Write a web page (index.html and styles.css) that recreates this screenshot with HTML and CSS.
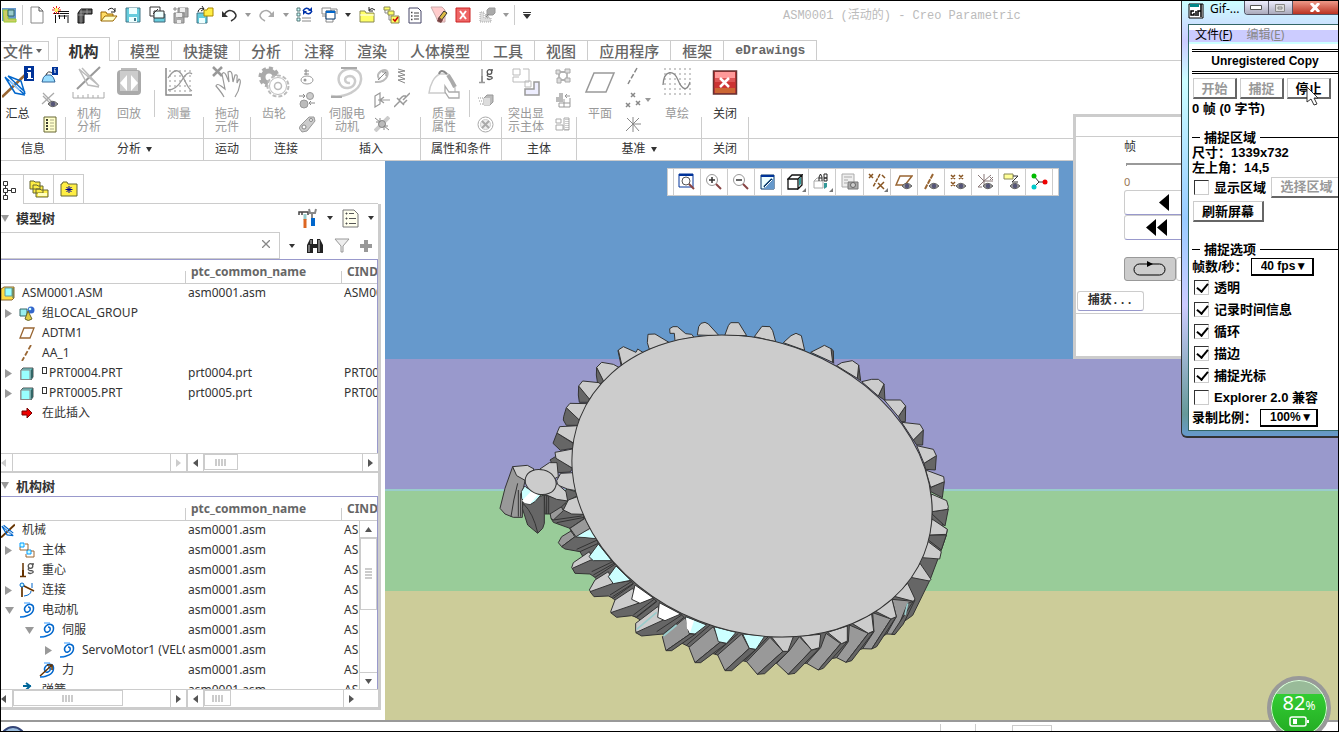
FILE: index.html
```html
<!DOCTYPE html>
<html lang="zh-CN">
<head>
    <meta charset="UTF-8">
    <meta name="viewport" content="width=device-width, initial-scale=1.0">
    <title>ASM0001 (活动的) - Creo Parametric</title>
    <link rel="stylesheet" href="styles.css">
</head>
<body>
    <!-- iconos compartidos -->
    <svg class="defs" width="0" height="0">
        <symbol id="caret" viewBox="0 0 7 4" preserveAspectRatio="none"><path d="M0 0h7L3.5 4z" fill="currentColor"/></symbol>
        <symbol id="right" viewBox="0 0 7 9" preserveAspectRatio="none"><path d="M0 0L7 4.500 0 9z" fill="currentColor"/></symbol>
        <symbol id="left" viewBox="0 0 7 9" preserveAspectRatio="none"><path d="M7 0L0 4.500 7 9z" fill="currentColor"/></symbol>
        <symbol id="eye" viewBox="0 0 11 8"><path d="M0 4Q5 -2 11 4Q5 10 0 4z" fill="#999" stroke="#555"/><circle cx="5.500" cy="4" r="2.500" fill="#557"/></symbol>
        <symbol id="motor" viewBox="0 0 16 16"><path d="M1 15C8 15 14 12 14.500 7C15 2 10 1 7 4C4 7 6 11 9 10C12 9 12 5 9 5" fill="none" stroke="#06c" stroke-width="1.500"/><path d="M5 1h6M1 15h4" stroke="#39f"/></symbol>
        <symbol id="part" viewBox="0 0 14 13"><path d="M1 3l2-2h10v9l-2 3H1z" fill="#6cc" stroke="#555"/><path d="M1 3h9v9.500H1z" fill="#9ff" stroke="#888"/><path d="M11 3l2-2v9l-2 2z" fill="#366"/></symbol>
        <symbol id="mech" viewBox="0 0 16 16"><path d="M0 16L16 1" stroke="#630" stroke-width="2.200"/><path d="M1 3L14 14M3 2L14 11M1 3L7 13L14 14" fill="none" stroke="#06c" stroke-width="1.300"/><path d="M4 5l7 7" stroke="#9cf"/></symbol>
        <symbol id="bodies" viewBox="0 0 16 16"><path d="M1 1h4v4H1zM8 8h4v4H8z" fill="#cff" stroke="#09f"/><path d="M6 2h3v6H1V5M12 9h3v6H7v-3" fill="none" stroke="#963"/></symbol>
        <symbol id="weight" viewBox="0 0 16 16"><path d="M4 1v13M1 14.500h6" stroke="currentColor" stroke-width="1.500"/><path d="M3 8h2v6H3z" fill="currentColor"/><circle cx="11.500" cy="4" r="2.300" fill="none" stroke="#555" stroke-width="1.300"/><path d="M13 2h2M10 6q-2 2 1 2.500q4 0 3 2q-3 2-5 0" fill="none" stroke="#555" stroke-width="1.300"/></symbol>
    </svg>

    <div class="screen">
        <header class="quickbar">
            <button class="q app" aria-label="Creo"><svg width="18" height="18" viewBox="0 0 18 18"><path d="M1 2h14v13H1z" fill="#69c"/><path d="M2 4h5v9h8v3H3z" fill="#cc6" stroke="#9c3"/><path d="M7 4h6v6H7z" fill="#9cc" stroke="#366"/></svg></button>
            <button class="q" aria-label="新建"><svg width="16" height="18" viewBox="0 0 16 18"><path d="M2 1h8l4 4v12H2z" fill="#fff" stroke="#888"/><path d="M10 1v4h4" fill="none" stroke="#555"/></svg></button>
            <button class="q" aria-label="桌面"><svg width="18" height="18" viewBox="0 0 18 18"><path d="M2 7.500h15M4 5.500h13M3.500 9v8M7.500 9v4M12.500 9v4M16 9v8M6 10h9" stroke="#111" fill="none"/><path d="M1 1l7 7M8 1L1 8M4.500 0v8M0 4h9" stroke="#e22"/><circle cx="4.500" cy="4" r="2" fill="#ff6"/></svg></button>
            <button class="q" aria-label="管道"><svg width="18" height="18" viewBox="0 0 18 18"><path d="M2 17V7l3-4h11v5H8v9z" fill="#555" stroke="#111"/><path d="M5 3v14M2 9h6M11 3v5M4 6h11" stroke="#aaa" stroke-width=".700"/></svg></button>
            <button class="q" aria-label="打开"><svg width="18" height="18" viewBox="0 0 18 18"><path d="M1 15V6h5l1 2h6v2" fill="#fd6" stroke="#960"/><path d="M1 15l4-5h12l-4 5z" fill="#ffc" stroke="#960"/><path d="M8 4q4-4 7 1m0-3v4h-4" fill="none" stroke="#222"/></svg></button>
            <button class="q" aria-label="保存"><svg width="16" height="16" viewBox="0 0 16 16"><path d="M1 1h14v14H1z" fill="#6cd" stroke="#478"/><path d="M4 1h8v6H4zM4 10h8v5H4z" fill="#eff"/><path d="M9 11h2v3H9z" fill="#478"/></svg></button>
            <button class="q" aria-label="另存为"><svg width="17" height="18" viewBox="0 0 17 18"><path d="M7 8h9v8H5v-5" fill="#6cd" stroke="#467"/><path d="M1 1h10v9H1z" fill="#fff" stroke="#333"/><path d="M5 5h10v7H5z" fill="#eff" stroke="#333"/><path d="M4 8l5-5" stroke="#333"/></svg></button>
            <button class="q" disabled aria-label="备份"><svg width="18" height="18" viewBox="0 0 18 18"><path d="M6 2h10v9H6zM2 7h10v10H2z" fill="#aaa" stroke="#888"/><path d="M8 2h5v4H8zM4 7h6v4H4zM5 14h4v3H5z" fill="#eee"/><path d="M1 3h4M3 1v4" stroke="#888"/></svg></button>
            <button class="q" aria-label="保存副本"><svg width="18" height="18" viewBox="0 0 18 18"><path d="M1 7h10v10H1z" fill="#6cd" stroke="#478"/><path d="M3 12h6v5H3z" fill="#eff"/><path d="M8 4h3l1-2h5v8H8z" fill="#fe4" stroke="#a80"/><path d="M2 6q1-5 6-3M6 0l2 3-3 2" fill="none" stroke="#222"/></svg></button>
            <button class="q" aria-label="撤消"><svg width="18" height="18" viewBox="0 0 18 18"><path d="M4 9Q8 2 14 6Q19 11 11 15" fill="none" stroke="#333" stroke-width="1.600"/><path d="M2 5v6h6z" fill="#333"/></svg></button>
            <button class="drop gray" aria-label="撤消列表"><svg width="6" height="4"><use href="#caret"/></svg></button>
            <button class="q" disabled aria-label="重做"><svg width="18" height="18" viewBox="0 0 18 18"><path d="M14 9Q10 2 4 6Q-1 11 7 15" fill="none" stroke="#aaa" stroke-width="1.600"/><path d="M16 5v6h-6z" fill="#aaa"/></svg></button>
            <button class="drop gray" aria-label="重做列表"><svg width="6" height="4"><use href="#caret"/></svg></button>
            <button class="q" aria-label="重新生成"><svg width="18" height="18" viewBox="0 0 18 18"><path d="M1 2h3v3H1zM1 7h3v3H1zM1 12h3v3H1z" fill="#cff" stroke="#577"/><path d="M6 12h9M6 15h9" stroke="#888"/><path d="M7 5q3-5 7-1M16 5q-3 5-7 1" fill="none" stroke="#03a" stroke-width="1.500"/><path d="M12 5h4V1zM11 5H7v4z" fill="#03a"/></svg></button>
            <button class="q" aria-label="窗口"><svg width="17" height="17" viewBox="0 0 17 17"><path d="M1 1h9v6H1zM11 2h5v5M1 9h4v6h7v-3" fill="#fff" stroke="#888"/><path d="M5 4h9v8H5z" fill="#fff" stroke="#036"/><path d="M5 5h9" stroke="#06c" stroke-width="2"/></svg></button>
            <button class="drop" aria-label="窗口列表"><svg width="6" height="4"><use href="#caret"/></svg></button>
            <button class="q" aria-label="工作目录"><svg width="17" height="18" viewBox="0 0 17 18"><path d="M1 5h5l1 2h8v9H1z" fill="#ff6" stroke="#885"/><path d="M1 9h14" stroke="#fff"/><path d="M10 4q3-3 6 0M10 1v4h4" fill="none" stroke="#222"/></svg></button>
            <button class="q" aria-label="模型树"><svg width="17" height="18" viewBox="0 0 17 18"><path d="M2 4v3h4M6 8v6h2" fill="none" stroke="#888"/><path d="M1 1h6v3H1zM5 5h6v4H5zM8 10h8v7H8z" fill="#ff6" stroke="#885"/><path d="M10 13l2 2 3-4" fill="none" stroke="#c00" stroke-width="1.500"/></svg></button>
            <button class="q" aria-label="列表"><svg width="16" height="17" viewBox="0 0 16 17"><path d="M2 1h9l3 3v12H2z" fill="#fff" stroke="#446"/><path d="M7 6h5M7 9h5M7 12h5" stroke="#444"/><path d="M4 5.500h1.500M4 9h1.500M4 12.500h1.500" stroke="#444" stroke-width="1.500"/></svg></button>
            <button class="q" aria-label="清除"><svg width="18" height="18" viewBox="0 0 18 18"><path d="M1 1h11l3 3v12H8L6 11z" fill="#fcc" stroke="#caa"/><path d="M8 13l6-8 3 2-6 8z" fill="#db4" stroke="#333"/><path d="M7 15l2-4 4 3-2 3z" fill="#744"/></svg></button>
            <button class="q" aria-label="关闭窗口"><svg width="16" height="16" viewBox="0 0 16 16"><path d="M1 1h14v14H1z" fill="#e66" stroke="#c22"/><path d="M5 4l6 8M11 4l-6 8" stroke="#fff" stroke-width="2"/></svg></button>
            <button class="q" disabled aria-label="放置"><svg width="18" height="18" viewBox="0 0 18 18"><path d="M2 6v10h11v-4H6V6z" fill="#ddd" stroke="#aaa" stroke-dasharray="1 1"/><path d="M9 4l2-2h6v5l-2 2H9z" fill="#aaa" stroke="#999"/><path d="M11 8l-3 3m0-3v3h3" stroke="#888" fill="none"/></svg></button>
            <button class="drop gray" aria-label="放置列表"><svg width="6" height="4"><use href="#caret"/></svg></button>
            <button class="q custom" aria-label="自定义"><svg width="8" height="7" viewBox="0 0 8 7"><path d="M0 0h8v1H0zM0 2h8L4 7z" fill="#333"/></svg></button>
            <h1 class="title">ASM0001 (活动的) - Creo Parametric</h1>
        </header>

        <nav class="tabs">
            <button class="tab file">文件<svg width="6" height="4"><use href="#caret"/></svg></button>
            <button class="tab active">机构</button>
            <div class="tab-set">
                <button class="tab">模型</button>
                <button class="tab">快捷键</button>
                <button class="tab">分析</button>
                <button class="tab">注释</button>
                <button class="tab">渲染</button>
                <button class="tab">人体模型</button>
                <button class="tab">工具</button>
                <button class="tab">视图</button>
                <button class="tab">应用程序</button>
                <button class="tab">框架</button>
                <button class="tab latin">eDrawings</button>
            </div>
        </nav>

        <section class="ribbon">
            <div class="group">
                <div class="tools">
                    <button class="big w33 on"><svg width="32" height="34" viewBox="0 0 32 34"><path d="M0 31L23 9" stroke="#963" stroke-width="2.500"/><path d="M3 11L22 28M6 10L23 26M3 11L13 27L23 29M6 10L19 15L23 28" fill="none" stroke="#06c" stroke-width="1.500"/><path d="M7 15l11 9" stroke="#9cf" stroke-width="1.500"/><path d="M22 0h10v15H22z" fill="#039"/><path d="M26 2h3v2h-3zM25 6h4v6h2v1h-6v-1h1V7h-1z" fill="#fff"/></svg><span>汇总</span></button>
                    <div class="stack w31">
                        <button aria-label="质量信息"><svg width="18" height="18" viewBox="0 0 18 18"><path d="M1 15q1-6 4-7h5q3 2 4 7z" fill="#9df" stroke="#369"/><path d="M5 8q2-5 6-2" fill="none" stroke="#333"/><path d="M11 0h6v8h-6z" fill="#039"/><path d="M14 1v1M13 3h1v3" stroke="#fff" fill="none"/></svg></button>
                        <button disabled aria-label="查看"><svg width="18" height="18" viewBox="0 0 18 18"><path d="M1 13L13 2M2 2l12 12M2 5l9 9" stroke="#aaa" stroke-width="1.300"/><use href="#eye" x="7" y="9" width="10" height="8"/></svg></button>
                        <button aria-label="列表"><svg width="14" height="17" viewBox="0 0 14 17"><path d="M1 1h12v15H1z" fill="#ffc" stroke="#663"/><path d="M3 4h2M3 7h2M3 10h2M3 13h2" stroke="#000" stroke-width="1.500"/><path d="M7 4h4M7 7h4M7 10h4M7 13h4" stroke="#aa8"/></svg></button>
                    </div>
                </div>
                <h2>信息</h2>
            </div>
            <div class="group">
                <div class="tools">
                    <button class="big w46" disabled><svg width="34" height="34" viewBox="0 0 34 34"><path d="M5 23L28 1" stroke="#999" stroke-width="2"/><path d="M7 3L26 19M10 2L27 20M7 3L16 19L27 21" fill="none" stroke="#bbb" stroke-width="1.500"/><path d="M1 26v6h31v-6M6 29v3M11 29v3M16 28v4M21 29v3M26 29v3" fill="none" stroke="#aaa"/></svg><span>机构<br>分析</span></button>
                    <button class="big w34" disabled><svg width="26" height="34" viewBox="0 0 26 34"><rect x="1" y="4" width="24" height="25" rx="4" fill="#aaa"/><path d="M4 5h18v20H4z" fill="#ccc"/><path d="M5 3h16" stroke="#777"/><path d="M11 9v16L4 17zM15 9v16l7-8z" fill="#fff"/></svg><span>回放</span></button>
                    <i class="sep"></i>
                    <button class="big w48" disabled><svg width="30" height="34" viewBox="0 0 30 34"><path d="M5 5h23M5 10h23M5 15h23M5 20h23M5 25h23" stroke="#ccc" stroke-width="2" stroke-dasharray="2 3"/><path d="M2 2v27h26" fill="none" stroke="#888" stroke-width="1.500"/><path d="M4 12Q13-2 19 11T28 25M4 24Q12 24 18 14T28 8" fill="none" stroke="#999" stroke-width="1.300"/></svg><span>测量</span></button>
                </div>
                <h2>分析<svg width="6" height="5"><use href="#caret"/></svg></h2>
            </div>
            <div class="group">
                <div class="tools">
                    <button class="big w46" disabled><svg width="32" height="34" viewBox="0 0 32 34"><path d="M2 1l9 9M11 1L2 10" stroke="#999" stroke-width="2.500"/><path d="M13 31Q11 27 5 20Q6 17 10 20L14 23L11 8Q13 5 15 9L18 16L17 6Q20 4 21 8L22 16L24 9Q27 8 26 12L26 17L28 13Q30 14 29 18Q28 25 24 31" fill="#fff" stroke="#999" stroke-width="1.200"/></svg><span>拖动<br>元件</span></button>
                </div>
                <h2>运动</h2>
            </div>
            <div class="group">
                <div class="tools">
                    <button class="big w46" disabled><svg width="32" height="34" viewBox="0 0 32 34"><circle cx="11" cy="11" r="6" fill="none" stroke="#aaa" stroke-width="5"/><circle cx="11" cy="11" r="9" fill="none" stroke="#aaa" stroke-width="3" stroke-dasharray="4 3"/><circle cx="20" cy="20" r="10.500" fill="#fff" stroke="#bbb" stroke-width="2" stroke-dasharray="4 2"/><circle cx="20" cy="20" r="8.500" fill="#fff" stroke="#bbb"/><circle cx="20" cy="20" r="3.500" fill="#fff" stroke="#bbb" stroke-width="1.500"/></svg><span>齿轮</span></button>
                    <div class="stack w20">
                        <button disabled aria-label="凸轮"><svg width="16" height="17" viewBox="0 0 16 17"><path d="M7 1v6M5 3h5M5 6h5" stroke="#888"/><ellipse cx="8" cy="12" rx="6" ry="4" fill="#fff" stroke="#999"/><circle cx="6" cy="12" r="1.500" fill="#999"/></svg></button>
                        <button disabled aria-label="3D 接触"><svg width="16" height="17" viewBox="0 0 16 17"><circle cx="11" cy="4" r="3.500" fill="#ccc" stroke="#999"/><circle cx="5" cy="12" r="4" fill="#bbb" stroke="#999"/><path d="M0 4h6M4 2l2 2-2 2M16 11h-6M12 9l-2 2 2 2" fill="none" stroke="#888"/></svg></button>
                        <button disabled aria-label="带"><svg width="17" height="17" viewBox="0 0 17 17"><path d="M2 9L10 1h5l1 4-8 10-5 1-3-4z" fill="#ccc" stroke="#999"/><circle cx="5" cy="11" r="2" fill="#fff" stroke="#888"/><circle cx="12" cy="4" r="1.500" fill="#fff" stroke="#888"/></svg></button>
                    </div>
                </div>
                <h2>连接</h2>
            </div>
            <div class="group">
                <div class="tools">
                    <button class="big w50" disabled><svg width="34" height="34" viewBox="0 0 34 34"><path d="M1 30C15 32 30 25 31 14C32 4 21 0 13 5C5 11 9 23 18 22C26 21 28 11 20 10C13 10 14 18 20 17" fill="none" stroke="#ccc" stroke-width="2.500"/><path d="M11 2h16M1 31h11" stroke="#aaa" stroke-width="2"/></svg><span>伺服电<br>动机</span></button>
                    <div class="stack w20">
                        <button disabled aria-label="执行电动机"><svg width="16" height="16" viewBox="0 0 16 16"><path d="M1 14C15 15 16 2 11 2S1 8 6 11" fill="none" stroke="#bbb" stroke-width="2"/><path d="M4 12l8-8M8 4h4v4" fill="none" stroke="#888"/></svg></button>
                        <button disabled aria-label="力/扭矩"><svg width="16" height="16" viewBox="0 0 16 16"><path d="M1 4l5-3v11l-5 3zM4 8h12M10 5L6 8l4 3" fill="none" stroke="#999" stroke-width="1.200"/></svg></button>
                        <button disabled aria-label="衬套"><svg width="16" height="16" viewBox="0 0 16 16"><path d="M1 15L15 1" stroke="#ccc" stroke-width="4"/><circle cx="8" cy="8" r="3.500" fill="#bbb" stroke="#888"/><path d="M1 2l5 4M15 14l-5-4M2 6h4V2M14 10h-4v4" fill="none" stroke="#888"/></svg></button>
                    </div>
                    <div class="stack w20">
                        <button disabled aria-label="弹簧"><svg width="12" height="16" viewBox="0 0 12 16"><path d="M2 1l7 2-7 1 7 3-7 1 7 3-7 1 7 3" fill="none" stroke="#888"/></svg></button>
                        <button disabled aria-label="阻尼器"><svg width="16" height="16" viewBox="0 0 16 16"><path d="M0 15l6-6M3 6l7 7M5 8l4-4M9 12l4-4M9 4h3M9 8l7-7" fill="none" stroke="#999" stroke-width="1.500"/></svg></button>
                    </div>
                </div>
                <h2>插入</h2>
            </div>
            <div class="group">
                <div class="tools">
                    <button class="big w46" disabled><svg width="32" height="34" viewBox="0 0 32 34"><path d="M1 27C2 19 6 10 12 8h8l7 14v5z" fill="#fff" stroke="#ccc" stroke-width="1.500"/><path d="M11 8q2-6 8 0" fill="none" stroke="#888" stroke-width="2"/><path d="M20 9q4 6 7 12" fill="none" stroke="#aaa" stroke-width="4"/><path d="M17 20l4 6h10v6H21l-4-6z" fill="#fff" stroke="#aaa" stroke-width="1.300"/></svg><span>质量<br>属性</span></button>
                    <i class="sep near"></i>
                    <div class="stack w31">
                        <button disabled aria-label="重力"><svg class="muted" width="16" height="16"><use href="#weight"/></svg></button>
                        <button disabled aria-label="初始条件"><svg width="16" height="16" viewBox="0 0 16 16"><path d="M6 6l3-3h6v7l-3 3H6z" fill="#bbb" stroke="#999"/><path d="M6 6h6v7H6z" fill="#ddd"/><path d="M0 6h5M1 9h4M2 12h3" stroke="#999" stroke-dasharray="1 1"/></svg></button>
                        <button disabled aria-label="终止条件"><svg width="17" height="17" viewBox="0 0 17 17"><circle cx="8.500" cy="8.500" r="7.500" fill="#fff" stroke="#aaa"/><circle cx="8.500" cy="8.500" r="5" fill="#eee" stroke="#ccc"/><path d="M5 5l7 7M12 5l-7 7" stroke="#aaa" stroke-width="2"/></svg></button>
                    </div>
                </div>
                <h2>属性和条件</h2>
            </div>
            <div class="group">
                <div class="tools">
                    <button class="big w48" disabled><svg width="32" height="34" viewBox="0 0 32 34"><path d="M3 3h7v6H3zM13 3h6v13H3v-5h6M15 15h6v6h-6z" fill="#fff" stroke="#bbb"/><path d="M24 16h5v13H15v-6h9z" fill="#eef" stroke="#999" stroke-width="1.500"/></svg><span>突出显<br>示主体</span></button>
                    <div class="stack w24">
                        <button disabled aria-label="重新连接"><svg width="16" height="16" viewBox="0 0 16 16"><path d="M4 4h8v8H4z" fill="none" stroke="#999" stroke-width="1.300"/><path d="M1 2h4v4H1zM10 1h5v4h-5zM2 10h4v5H2zM10 10h5v4h-5z" fill="#ddd" stroke="#aaa"/></svg></button>
                        <button disabled aria-label="重定义主体"><svg width="16" height="16" viewBox="0 0 16 16"><path d="M1 5h7v5H1zM4 1h4v4H4z" fill="#bbb"/><path d="M4 11h11V6M9 7v8M4 11v4h11v-4M10 4h5M12 2l-2 2 2 2" fill="none" stroke="#999"/></svg></button>
                        <button disabled aria-label="查看主体"><svg width="16" height="16" viewBox="0 0 16 16"><path d="M1 3h5v4H1zM1 9h7v5H1zM9 2h5v12H9z" fill="#fff" stroke="#aaa"/><path d="M11 3v11M13 3v11" stroke="#999" stroke-dasharray="1 1"/></svg></button>
                    </div>
                </div>
                <h2>主体</h2>
            </div>
            <div class="group">
                <div class="tools">
                    <button class="big w46" disabled><svg width="32" height="34" viewBox="0 0 32 34"><path d="M10 7h20L22 26H2z" fill="none" stroke="#999" stroke-width="1.500"/></svg><span>平面</span></button>
                    <div class="stack w20">
                        <button disabled aria-label="轴"><svg width="16" height="18" viewBox="0 0 16 18"><path d="M12 1L3 17" stroke="#888" stroke-width="1.500" stroke-dasharray="5 2"/></svg></button>
                        <button disabled aria-label="点"><svg width="17" height="17" viewBox="0 0 17 17"><path d="M6 1l4 4M10 1L6 5M1 11l4 4M5 11l-4 4M11 9l4 4M15 9l-4 4" stroke="#888" stroke-width="1.500"/></svg></button>
                        <button disabled aria-label="坐标系"><svg width="17" height="17" viewBox="0 0 17 17"><path d="M8 8V1M8 8l-6-6M8 8l-7 7M8 8h8M8 8l6 7M8 8l6-6M8 8v8" stroke="#888"/></svg></button>
                    </div>
                    <button class="drop gray mini" aria-label="基准列表"><svg width="6" height="4"><use href="#caret"/></svg></button>
                    <button class="big w48" disabled><svg width="30" height="34" viewBox="0 0 30 34"><path d="M2 3h27M2 8h27M2 13h27M2 18h27M2 23h27M2 28h27" stroke="#ccc" stroke-width="2" stroke-dasharray="2 3"/><path d="M1 19C2 3 12 4 16 14S25 26 28 16" fill="none" stroke="#888" stroke-width="1.300"/></svg><span>草绘</span></button>
                </div>
                <h2>基准<svg width="6" height="5"><use href="#caret"/></svg></h2>
            </div>
            <div class="group last">
                <div class="tools">
                    <button class="big w46 on"><svg width="26" height="34" viewBox="0 0 26 34"><path d="M1.500 5h23v23h-23z" fill="#c33" stroke="#633" stroke-width="1.500"/><path d="M3 6h20v6H3z" fill="#f99"/><path d="M3 12h20v4H3z" fill="#d55"/><path d="M3 22h20v5H3z" fill="#c63"/><path d="M8 12l9 9M17 12l-9 9" stroke="#fff" stroke-width="2.500"/></svg><span>关闭</span></button>
                </div>
                <h2>关闭</h2>
            </div>
        </section>

        <main class="work">
            <aside class="side">
                <div class="side-tabs">
                    <button class="side-tab first" aria-label="模型树"><svg width="16" height="20" viewBox="0 0 16 20"><path d="M2.500 1.500h4v4h-4zM2.500 8.500h4v4h-4zM2.500 15.500h4v4h-4zM10.500 8.500h4v4h-4zM4.500 5v3M4.500 12v3M6 10.500h4" fill="#fff" stroke="#333"/></svg></button>
                    <button class="side-tab" aria-label="文件夹"><svg width="20" height="20" viewBox="0 0 20 20"><path d="M1 2h4l1 1h5v7H1zM4 6h4l1 1h5v7H4zM7 10h4l1 1h7v7H7z" fill="#fe4" stroke="#663"/><path d="M9 14h9v3H9z" fill="#ffb"/></svg></button>
                    <button class="side-tab" aria-label="收藏夹"><svg width="18" height="18" viewBox="0 0 18 18"><path d="M1 4h1l1-2h4l1 2h9v12H1z" fill="#fe4" stroke="#663"/><path d="M9 6v7M5.500 9.500h7M6.500 7l5 5M11.500 7l-5 5" stroke="#009"/></svg></button>
                    <i class="rest"></i>
                </div>

                <section class="panel model">
                    <header class="panel-head">
                        <svg class="gray" width="8" height="7"><use href="#caret"/></svg>
                        <h3>模型树</h3>
                        <button aria-label="设置"><svg width="20" height="20" viewBox="0 0 20 20"><path d="M1 7V4h9v3M4 4v3" fill="none" stroke="#444" stroke-width="1.500"/><path d="M7 6v6" stroke="#9cc" stroke-width="3"/><path d="M7 11v9" stroke="#d62" stroke-width="3"/><path d="M14 5v6M11 1l1 4h5l1-4" fill="none" stroke="#888" stroke-width="2"/><path d="M15 10v8" stroke="#06c" stroke-width="4"/></svg></button>
                        <button class="drop" aria-label="设置列表"><svg width="6" height="4"><use href="#caret"/></svg></button>
                        <button aria-label="显示"><svg width="17" height="19" viewBox="0 0 17 19"><path d="M1 1h11l4 4v13H1z" fill="#ffe" stroke="#777"/><path d="M4 4h1v1H4zM4 9h1v1H4zM4 14h1v1H4zM7 4.500h5M7 9.500h7M7 14.500h7" stroke="#555"/></svg></button>
                        <button class="drop" aria-label="显示列表"><svg width="6" height="4"><use href="#caret"/></svg></button>
                    </header>
                    <div class="search">
                        <input type="text" aria-label="搜索模型树">
                        <button class="clear" aria-label="清除"><svg width="8" height="8" viewBox="0 0 8 8"><path d="M0 0l8 8M8 0L0 8" stroke="#888" stroke-width="1.300"/></svg></button>
                        <button class="drop" aria-label="搜索选项"><svg width="6" height="4"><use href="#caret"/></svg></button>
                        <button aria-label="查找"><svg width="18" height="16" viewBox="0 0 18 16"><path d="M1 7l3-6h3v5h4V1h3l3 6v8h-6v-5H7v5H1z" fill="#222"/><path d="M3 7v7M5 2v4M13 2v12" stroke="#ccc"/></svg></button>
                        <button aria-label="过滤"><svg width="16" height="15" viewBox="0 0 16 15"><path d="M1 1h14L9 8v6H7V8z" fill="#eee" stroke="#999"/></svg></button>
                        <button aria-label="添加"><svg width="12" height="12" viewBox="0 0 12 12"><path d="M6 0v12M0 6h12" stroke="#999" stroke-width="4"/></svg></button>
                    </div>
                    <div class="tree">
                        <table>
                            <thead><tr><th class="c1"></th><th class="c2">ptc_common_name</th><th>CINDEX</th></tr></thead>
                            <tbody>
                                <tr><td><div class="node l0"><svg width="14" height="15" viewBox="0 0 14 15"><path d="M0 3l3-2h10v11l-2 2H0z" fill="#fd4" stroke="#863"/><path d="M4 2h7v8H4z" fill="#9ff" stroke="#699"/><path d="M12 2v10" stroke="#366"/></svg>ASM0001.ASM</div></td><td>asm0001.asm</td><td>ASM0001</td></tr>
                                <tr><td><div class="node l1"><button aria-label="展开"><svg width="7" height="9"><use href="#right"/></svg></button><svg width="16" height="15" viewBox="0 0 16 15"><path d="M1 3h7v7H1z" fill="#9ee" stroke="#366"/><circle cx="12" cy="4" r="3.500" fill="#36c"/><circle cx="11" cy="3" r="1.300" fill="#cff"/><path d="M9 5l4 8q-4 3-7 0z" fill="#dc4" stroke="#663"/></svg>组LOCAL_GROUP</div></td><td></td><td></td></tr>
                                <tr><td><div class="node l1"><i></i><svg width="16" height="12" viewBox="0 0 16 12"><path d="M5 1h10l-4 10H1z" fill="none" stroke="#963" stroke-width="1.300"/></svg>ADTM1</div></td><td></td><td></td></tr>
                                <tr><td><div class="node l1"><i></i><svg width="16" height="16" viewBox="0 0 16 16"><path d="M12 0L3 16" stroke="#963" stroke-width="1.800" stroke-dasharray="5 2"/></svg>AA_1</div></td><td></td><td></td></tr>
                                <tr><td><div class="node l1"><button aria-label="展开"><svg width="7" height="9"><use href="#right"/></svg></button><svg width="14" height="13"><use href="#part"/></svg><b class="mark"></b>PRT0004.PRT</div></td><td>prt0004.prt</td><td>PRT0004</td></tr>
                                <tr><td><div class="node l1"><button aria-label="展开"><svg width="7" height="9"><use href="#right"/></svg></button><svg width="14" height="13"><use href="#part"/></svg><b class="mark"></b>PRT0005.PRT</div></td><td>prt0005.prt</td><td>PRT0005</td></tr>
                                <tr><td><div class="node l1"><i></i><svg width="12" height="12" viewBox="0 0 12 12"><path d="M1 4h5V1l5 5-5 5V8H1z" fill="#e00" stroke="#700"/></svg>在此插入</div></td><td></td><td></td></tr>
                            </tbody>
                        </table>
                    </div>
                    <div class="bars">
                        <div class="bar b1 off"><button aria-label="向左"><svg width="5" height="8"><use href="#left"/></svg></button><span class="track"></span><button aria-label="向右"><svg width="5" height="8"><use href="#right"/></svg></button></div>
                        <div class="bar b2"><button aria-label="向左"><svg width="5" height="8"><use href="#left"/></svg></button><span class="track"><span class="thumb t34"></span></span><button aria-label="向右"><svg width="5" height="8"><use href="#right"/></svg></button></div>
                    </div>
                </section>

                <section class="panel mechanism">
                    <header class="panel-head slim">
                        <svg class="gray" width="8" height="7"><use href="#caret"/></svg>
                        <h3>机构树</h3>
                    </header>
                    <div class="tree">
                        <table>
                            <thead><tr><th class="c1"></th><th class="c2">ptc_common_name</th><th>CINDEX</th></tr></thead>
                            <tbody>
                                <tr><td><div class="node l0"><svg width="14" height="15"><use href="#mech"/></svg>机械</div></td><td>asm0001.asm</td><td>ASM0001</td></tr>
                                <tr><td><div class="node l1"><button aria-label="展开"><svg width="7" height="9"><use href="#right"/></svg></button><svg width="16" height="16"><use href="#bodies"/></svg>主体</div></td><td>asm0001.asm</td><td>ASM0001</td></tr>
                                <tr><td><div class="node l1"><i></i><svg class="brown" width="16" height="16"><use href="#weight"/></svg>重心</div></td><td>asm0001.asm</td><td>ASM0001</td></tr>
                                <tr><td><div class="node l1"><button aria-label="展开"><svg width="7" height="9"><use href="#right"/></svg></button><svg width="16" height="16" viewBox="0 0 16 16"><path d="M3 3v12M3 3l12 6" stroke="#630" stroke-width="1.700"/><path d="M13 1v5M5 14q7-1 7-5" fill="none" stroke="#06c"/><circle cx="3" cy="3" r="2" fill="#cff" stroke="#06c"/></svg>连接</div></td><td>asm0001.asm</td><td>ASM0001</td></tr>
                                <tr><td><div class="node l1"><button aria-label="折叠"><svg width="9" height="7"><use href="#caret"/></svg></button><svg width="16" height="16"><use href="#motor"/></svg>电动机</div></td><td>asm0001.asm</td><td>ASM0001</td></tr>
                                <tr><td><div class="node l2"><button aria-label="折叠"><svg width="9" height="7"><use href="#caret"/></svg></button><svg width="16" height="16"><use href="#motor"/></svg>伺服</div></td><td>asm0001.asm</td><td>ASM0001</td></tr>
                                <tr><td><div class="node l3"><button aria-label="展开"><svg width="7" height="9"><use href="#right"/></svg></button><svg width="16" height="16"><use href="#motor"/></svg>ServoMotor1 (VELOCITY)</div></td><td>asm0001.asm</td><td>ASM0001</td></tr>
                                <tr><td><div class="node l2"><i></i><svg width="16" height="16" viewBox="0 0 16 16"><use href="#motor"/><path d="M1 14L13 3M8 3h5v5" fill="none" stroke="#630" stroke-width="1.500"/></svg>力</div></td><td>asm0001.asm</td><td>ASM0001</td></tr>
                                <tr><td><div class="node l1"><i></i><svg width="14" height="16" viewBox="0 0 14 16"><path d="M3 4h8M3 8h8M3 12h8M6 1l4 3-4 4 4 3-4 4" fill="none" stroke="#069" stroke-width="2"/></svg>弹簧</div></td><td>asm0001.asm</td><td>ASM0001</td></tr>
                            </tbody>
                        </table>
                        <div class="vbar"><button aria-label="向上"><svg class="flip" width="7" height="5"><use href="#caret"/></svg></button><span class="vtrack"><span class="vthumb"></span></span><button aria-label="向下"><svg width="7" height="5"><use href="#caret"/></svg></button></div>
                    </div>
                    <div class="bars">
                        <div class="bar b1"><button aria-label="向左"><svg width="5" height="8"><use href="#left"/></svg></button><span class="track"><span class="thumb t110"></span></span><button aria-label="向右"><svg width="5" height="8"><use href="#right"/></svg></button></div>
                        <div class="bar b2 short"><button aria-label="向左"><svg width="5" height="8"><use href="#left"/></svg></button><span class="track"><span class="thumb t27"></span></span><button aria-label="向右"><svg width="5" height="8"><use href="#right"/></svg></button></div>
                    </div>
                </section>
            </aside>

            <section class="canvas">
                <div class="view-tools">
                    <button aria-label="重新调整"><svg width="18" height="18" viewBox="0 0 18 18"><path d="M1 1h14v13H1z" fill="#fff" stroke="#039"/><path d="M1 2h14" stroke="#039" stroke-width="2"/><circle cx="8" cy="8" r="4" fill="#fff" stroke="#555"/><path d="M11 11l5 5" stroke="#844" stroke-width="2"/></svg></button>
                    <button aria-label="放大"><svg width="18" height="18" viewBox="0 0 18 18"><circle cx="7" cy="7" r="5.500" fill="#fff" stroke="#999"/><path d="M7 4v6M4 7h6" stroke="#333" stroke-width="1.500"/><path d="M11 11l5 5" stroke="#844" stroke-width="2"/></svg></button>
                    <button aria-label="缩小"><svg width="18" height="18" viewBox="0 0 18 18"><circle cx="7" cy="7" r="5.500" fill="#fff" stroke="#999"/><path d="M4 7h6" stroke="#333" stroke-width="1.500"/><path d="M11 11l5 5" stroke="#844" stroke-width="2"/></svg></button>
                    <button aria-label="重画"><svg width="16" height="17" viewBox="0 0 16 17"><path d="M1 1h13v14H1z" fill="#eff" stroke="#036"/><path d="M1 2h13" stroke="#039" stroke-width="2"/><path d="M4 15L14 4v11z" fill="#69c"/><path d="M4 13L12 5" stroke="#036" stroke-width="2"/><path d="M5 13L12 6" stroke="#fff"/></svg></button>
                    <button class="more" aria-label="显示样式"><svg width="16" height="16" viewBox="0 0 16 16"><path d="M1 5h10v10H1zM1 5l4-4h10l-4 4zM15 1v10l-4 4V5z" fill="#fff" stroke="#111" stroke-width="1.300"/><path d="M12 5l2-2v7l-2 2z" fill="#399"/></svg></button>
                    <button class="more" aria-label="已命名视图"><svg width="18" height="18" viewBox="0 0 18 18"><path d="M1 8h9v7H1zM1 8l3-3h2" fill="#fff" stroke="#aaa"/><path d="M11 10h3v4l-3 2z" fill="#399"/><path d="M6 8V4l1.500-3L9 4v4M6 5h3M11 1v7h3V5h-3h3V1z" fill="none" stroke="#222"/></svg></button>
                    <button aria-label="视图管理器"><svg width="18" height="18" viewBox="0 0 18 18"><path d="M1 1h12v13H1zM3 4h8M3 7h4M3 10h3" fill="#eee" stroke="#aaa"/><path d="M7 9h10v7H7z" fill="#aaa" stroke="#777"/><circle cx="12" cy="12" r="2.500" fill="#ccc" stroke="#666"/></svg></button>
                    <button class="more" aria-label="基准显示"><svg width="18" height="18" viewBox="0 0 18 18"><path d="M1 1l4 4M5 1L1 5M10 10l6 6M16 9l-7 7M14 2l3 3" stroke="#852" stroke-width="1.500"/><path d="M12 1L5 14" stroke="#852" stroke-width="1.500" stroke-dasharray="4 1"/></svg></button>
                    <button aria-label="平面显示"><svg width="18" height="18" viewBox="0 0 18 18"><path d="M5 3h12L10 12H1z" fill="none" stroke="#963" stroke-width="1.500"/><use href="#eye" x="7" y="9" width="10" height="8"/></svg></button>
                    <button aria-label="轴显示"><svg width="18" height="18" viewBox="0 0 18 18"><path d="M11 1L3 16" stroke="#963" stroke-width="2" stroke-dasharray="5 1"/><use href="#eye" x="7" y="9" width="10" height="8"/></svg></button>
                    <button aria-label="点显示"><svg width="18" height="18" viewBox="0 0 18 18"><path d="M2 2l4 4M6 2L2 6M10 2l4 4M14 2l-4 4M2 9l4 4M6 9l-4 4" stroke="#852" stroke-width="1.500"/><use href="#eye" x="7" y="9" width="10" height="8"/></svg></button>
                    <button aria-label="坐标系显示"><svg width="18" height="18" viewBox="0 0 18 18"><path d="M8 8L2 2M8 8l7-6M8 8l-6 6M8 1v13M8 8h9M2 14h4M14 4l3 3M17 4l-3 3" stroke="#877"/><use href="#eye" x="7" y="9" width="10" height="8"/></svg></button>
                    <button aria-label="注释显示"><svg width="18" height="18" viewBox="0 0 18 18"><path d="M1 1h9v5H1z" fill="#ff9" stroke="#885"/><path d="M10 3h5L9 9h6" fill="none" stroke="#333"/><use href="#eye" x="7" y="9" width="10" height="8"/></svg></button>
                    <button aria-label="旋转中心"><svg width="18" height="18" viewBox="0 0 18 18"><path d="M4 3l5 6h6M9 9l-5 5" fill="none" stroke="#333"/><circle cx="4" cy="3" r="2.500" fill="#0b0"/><circle cx="15" cy="9" r="2.500" fill="#e00"/><circle cx="4" cy="14" r="2.500" fill="#0cc"/></svg></button>
                </div>

                <!-- engranaje y piñón -->
                <svg class="gear" width="460" height="370" viewBox="495 315 460 370" stroke="#333" stroke-width="3" stroke-linejoin="round" role="img" aria-label="齿轮装配">
                    <g transform="translate(490 500) scale(.33333)">
                        <path d="M200 0L243 93 270 155 315 232 365 292 435 350 520 403 597 440 683 465 770 485 860 490 950 490 1040 473 1118 446 1190 402 1268 346 1320 240 1352 155 1369 106 1340 20 900 300z" fill="#666"/>
                        <g fill="#999">
                            <path d="M1270 304L1253 310 1215 403 1190 402 1219 350 1206 298z"/>
                            <path d="M1203 357L1145 447 1118 446 1152 395 1148 338z"/>
                            <path d="M1135 400L1068 487 1040 473 1075 425 1078 375z"/>
                            <path d="M1052 431L985 510 950 490 992 443 1008 400z"/>
                            <path d="M965 450L895 523 860 490 898 452 928 410z"/>
                            <path d="M879 454L802 523 770 485 840 412z"/>
                            <path d="M778 445L705 512 683 465 755 402z"/>
                            <path d="M690 427L615 488 597 442 670 380z"/>
                            <path d="M600 402L528 452 517 410 587 352z"/>
                            <path d="M205 128L215 110 243 93 255 110 215 140z"/>
                        </g>
                        <g fill="#ccc">
                            <path d="M245 203L250 188 298 155 310 182 255 215z"/>
                            <path d="M298 270L315 240 355 215 370 251 312 285z"/>
                            <path d="M362 335L375 300 428 265 450 308 375 345z"/>
                            <path d="M437 395L437 370 503 320 525 362 455 405z"/>
                        </g>
                        <g fill="#666">
                            <path d="M1270 304L1275 300 1240 372 1215 403 1205 403z"/>
                            <path d="M1203 357L1219 350 1160 440 1145 447z"/>
                            <path d="M1135 400L1151 395 1085 482 1068 487z"/>
                            <path d="M1052 431L1072 425 1000 505 985 510z"/>
                            <path d="M965 450L988 445 915 520 895 523z"/>
                            <path d="M879 454L898 452 824 521 802 523z"/>
                            <path d="M778 445L798 448 725 512 705 512z"/>
                            <path d="M690 427L710 430 632 488 615 488z"/>
                            <path d="M600 402L617 402 545 452 528 452z"/>
                            <path d="M215 140L255 110 318 115 325 130 270 155 225 147z"/>
                            <path d="M255 220L247 205 303 180 365 182 375 193 315 232 300 222z"/>
                            <path d="M312 290L300 275 370 250 422 242 430 252 370 295 355 288z"/>
                            <path d="M380 352L362 338 450 308 490 294 500 305 440 352 425 347z"/>
                            <path d="M455 408L437 398 520 360 572 342 582 352 520 402z"/>
                        </g>
                        <path d="M260 148L322 120M305 215L368 185M310 225L372 190M360 285L424 245M368 290L430 250M430 345L492 298M440 350L500 303M500 395L575 345M590 435L660 375M675 462L745 400M765 482L835 410" fill="none"/>
                        <path d="M440 388L500 337M520 408L560 375M1245 345L1253 310" stroke="#9cc" stroke-width="5"/>
                        <g fill="#ccc">
                            <path d="M1323 57L1372 88 1369 104 1318 106z"/>
                            <path d="M1313 124L1354 155 1349 177 1297 173z"/>
                            <path d="M1290 190L1323 238 1318 243 1262 232z"/>
                            <path d="M1253 250L1275 297 1270 304 1213 289z"/>
                            <path d="M1206 298L1219 350 1203 357 1155 333z"/>
                            <path d="M1145 342L1151 393 1135 400 1086 370z"/>
                            <path d="M1072 378L1072 423 1055 431 1013 397z"/>
                            <path d="M992 403L988 443 965 450 930 408z"/>
                            <path d="M910 410L894 454 879 454 844 410z"/>
                            <path d="M245 95L290 62 318 115 255 110z"/>
                        </g>
                        <g fill="#cff">
                            <path d="M825 407L798 448 778 445 758 402z"/>
                            <path d="M738 397L710 430 685 425 672 380z"/>
                            <path d="M650 375L615 402 597 400 587 350z"/>
                            <path d="M422 241L370 251 355 230 378 198z"/>
                            <path d="M365 182L310 182 297 170 325 132z"/>
                            <path d="M256 105L300 90 316 114 258 109z" stroke="none"/>
                        </g>
                        <path d="M588 353L612 362 600 399 591 385z" fill="#fff" stroke="none"/>
                        <path d="M572 342L525 362 503 352 508 308zM490 294L450 310 425 298 435 255z" fill="#fff"/>
                    </g>
                    <g transform="translate(720 310) scale(.33333)">
                        <g fill="#666">
                            <path d="M333 116L340 122 341 160 335 154z"/>
                            <path d="M416 165L422 212 412 205z"/>
                            <path d="M492 222L495 271 475 258z"/>
                            <path d="M557 288L556 335 543 335 535 320z"/>
                            <path d="M610 360L608 405 590 405 580 390z"/>
                            <path d="M649 437L646 480 617 478 612 460z"/>
                            <path d="M673 515L667 563 632 545 632 532z"/>
                            <path d="M685 597L675 648 636 612 636 605z"/>
                            <path d="M679 675L664 720 625 690 628 675z"/>
                        </g>
                        <g fill="#ccc">
                            <path d="M14 77L25 47 32 38 56 38 80 77z"/>
                            <path d="M103 80L126 49 150 50 158 62 167 95z"/>
                            <path d="M190 98L213 77 228 70 244 77 254 121z"/>
                            <path d="M272 127L300 113 313 106 333 116 338 157z"/>
                            <path d="M350 167L365 158 397 152 416 165 412 205z"/>
                            <path d="M425 215L455 208 475 208 492 222 475 258z"/>
                            <path d="M493 270L542 270 557 288 535 320z"/>
                            <path d="M545 337L600 343 610 360 580 390z"/>
                            <path d="M590 407L640 418 649 437 612 460z"/>
                            <path d="M617 480L671 500 673 515 632 532z"/>
                            <path d="M634 552L680 572 685 590 683 598 636 605z"/>
                            <path d="M636 627L682 658 679 673 628 675z"/>
                        </g>
                    </g>
                    <g transform="translate(490 310) scale(.33333)">
                        <g fill="#666">
                            <path d="M394 170L384 122 398 150z"/>
                            <path d="M320 172L341 212 332 222 323 222 319 195z"/>
                            <path d="M266 228L298 265 297 277 268 277 265 255z"/>
                            <path d="M229 293L268 330 265 346 229 346 220 330 221 320z"/>
                            <path d="M201 369L250 400 248 415 211 421 189 400z"/>
                            <path d="M196 440L248 476 240 486 205 488 180 450z"/>
                            <path d="M232 537L257 545 262 557 232 574 200 560z"/>
                            <path d="M190 637L183 625 217 598 280 613 283 625 240 655z"/>
                        </g>
                        <path d="M183 625L180 607 213 588 220 602 190 630zM240 655L285 625 300 655 258 680z" fill="#999"/>
                        <path d="M190 630L275 618M200 638L283 622" fill="none"/>
                        <g fill="#ccc">
                            <path d="M622 75L626 50 633 40 645 37 655 42 687 77z"/>
                            <path d="M555 92L553 70 540 70 539 56 549 50 562 50 587 71 605 73 612 82z"/>
                            <path d="M478 118L472 98 474 73 495 72 540 99z"/>
                            <path d="M396 167L385 120 400 110 438 127 443 117 463 130z"/>
                            <path d="M320 172L335 157 370 163 390 174 341 214z"/>
                            <path d="M266 228L278 213 327 218 335 226 298 267z"/>
                            <path d="M229 293L240 280 295 281 268 330z"/>
                            <path d="M201 369L209 350 265 347 252 400z"/>
                            <path d="M195 427L248 417 250 476 198 445z"/>
                            <path d="M200 512L212 490 250 488 258 542 232 537 203 525z"/>
                            <path d="M220 600L235 570 262 560 283 613 245 612z"/>
                        </g>
                        <!-- piñón -->
                        <path d="M30 595L45 535 68 470 75 485 105 512 98 545 97 622 70 622 45 612z" fill="#999"/>
                        <path d="M85 540V620M92 550V620M63 620Q70 570 83 520" fill="none"/>
                        <path d="M68 470L112 466 132 477 107 512 80 497z" fill="#ccc"/>
                        <path d="M100 575L97 595 113 645 143 670 158 655 163 640 163 555z" fill="#666"/>
                        <path d="M101 582Q130 610 143 668" fill="none"/>
                        <path d="M163 555L233 573 215 590 180 612 165 612z" fill="#666"/>
                        <path d="M170 558V612M176 560V612" fill="none"/>
                        <path d="M150 477L178 458 201 458 205 500 190 508z" fill="#ccc"/>
                        <path d="M165 553L195 530 200 520 228 545 233 573 200 568z" fill="#ccc"/>
                        <path d="M94 545L104 528 108 532 152 556 135 575 122 583 105 580 95 565z" fill="#cff"/>
                        <path d="M125 542L145 553 120 582 105 580 96 572z" fill="#fff" stroke="none"/>
                        <ellipse cx="152" cy="516" rx="47" ry="37" transform="rotate(15 152 516)" fill="#ccc"/>
                    </g>
                    <ellipse cx="752" cy="486" rx="185" ry="145" transform="rotate(21.600 752 486)" fill="#ccc" stroke-width="1"/>
                </svg>
            </section>
        </main>

        <footer class="status">
            <svg class="globe" width="24" height="8" viewBox="0 0 24 8"><circle cx="12" cy="15" r="12" fill="#9bd" stroke="#347" stroke-width="2"/></svg>
            <i class="tick"></i><i class="tick"></i><i class="slot"></i>
        </footer>

        <!-- ventana de animación -->
        <section class="player">
            <div class="player-top"></div>
            <div class="player-body">
                <label for="frame">帧</label>
                <input type="range" id="frame" min="0" max="100" value="0">
                <output for="frame">0</output>
                <button class="step" aria-label="后退"><svg width="10" height="17" viewBox="0 0 10 17"><path d="M10 0v17L0 8.500z"/></svg></button>
                <button class="step fast" aria-label="快退"><svg width="21" height="17" viewBox="0 0 21 17"><path d="M10 0v17L0 8.500zM21 0v17l-10-8.500z"/></svg></button>
                <div class="modes">
                    <button class="loop" aria-label="循环"><svg width="34" height="16" viewBox="0 0 34 16"><rect x="1" y="3" width="31" height="11" rx="5.500" fill="none" stroke="#000"/><path d="M14 0l6 3-6 3z"/></svg></button>
                    <button class="once" aria-label="单次"></button>
                </div>
            </div>
            <div class="player-foot"><button class="capture">捕获...</button></div>
        </section>

        <!-- ventana del grabador -->
        <section class="recorder">
            <header class="rec-title">
                <svg width="17" height="18" viewBox="0 0 17 18"><path d="M1 3h14v14H1z" fill="#fff" stroke="#000"/><path d="M2 3h9v3H2z" fill="#088"/><path d="M6 10H3v4h3v-2M8 10v5M13 3v13M10 15v-5h3" fill="none" stroke="#000" stroke-width="1.500"/></svg>
                <span>Gif-...</span>
                <div class="win-btns">
                    <button aria-label="最小化"><svg width="12" height="5" viewBox="0 0 12 5"><path d="M.500.500h11v4H.500z" fill="#fff" stroke="#555"/></svg></button>
                    <button aria-label="最大化"><svg width="10" height="8" viewBox="0 0 10 8"><path d="M.500.500h9v7h-9zM3 3h4v2H3z" fill="#ddd" stroke="#888"/></svg></button>
                    <button class="x" aria-label="关闭"><svg width="12" height="9" viewBox="0 0 12 9"><path d="M2 0l8 9M10 0L2 9" stroke="#fff" stroke-width="3"/></svg></button>
                </div>
            </header>
            <div class="client">
                <nav class="menu"><a href="#">文件(<u>F</u>)</a><a href="#" class="dim">编辑(<u>E</u>)</a></nav>
                <div class="rec-body">
                    <p class="banner">Unregistered Copy</p>
                    <div class="rec-btns"><button disabled>开始</button><button disabled>捕捉</button><button>停止</button></div>
                    <p class="frames">0 帧 (0 字节)</p>
                    <h4>捕捉区域</h4>
                    <p>尺寸：1339x732</p>
                    <p>左上角：14,5</p>
                    <div class="area"><label><input type="checkbox">显示区域</label><button disabled>选择区域</button></div>
                    <button class="refresh">刷新屏幕</button>
                    <h4 class="opts">捕捉选项</h4>
                    <div class="pick"><label for="fps">帧数/秒：</label><select id="fps" class="s62"><option>40 fps▼</option></select></div>
                    <label class="opt"><input type="checkbox" checked>透明</label>
                    <label class="opt"><input type="checkbox" checked>记录时间信息</label>
                    <label class="opt"><input type="checkbox" checked>循环</label>
                    <label class="opt"><input type="checkbox" checked>描边</label>
                    <label class="opt"><input type="checkbox" checked>捕捉光标</label>
                    <label class="opt"><input type="checkbox">Explorer 2.0 兼容</label>
                    <div class="pick"><label for="scale">录制比例：</label><select id="scale" class="s58"><option>100%▼</option></select></div>
                </div>
            </div>
            <svg class="cursor" width="13" height="20" viewBox="0 0 13 20"><path d="M1 1v15l4-3 3 6 3-1-3-6h4z" fill="#fff" stroke="#333"/></svg>
        </section>

        <div class="battery"><b>82<small>%</small></b><svg width="20" height="11" viewBox="0 0 20 11"><rect x="1" y="1" width="16" height="9" rx="2" fill="none" stroke="#fff" stroke-width="1.500"/><path d="M4 3h4v5H4zM18 4h2v3h-2z" fill="#fff"/></svg></div>
    </div>
</body>
</html>
```
FILE: styles.css
```css
* {
    box-sizing: border-box;
}

body {
    margin: 0;
    font-family: "Noto Sans", "Noto Sans CJK SC", sans-serif;
    font-size: 12px;
    line-height: 16px;
    color: #333;
    background: #fff;
}

h1, h2, h3, h4, p {
    margin: 0;
    font-size: 12px;
    font-weight: normal;
}

button {
    padding: 0;
    border: 0;
    background: none;
    font: inherit;
    color: inherit;
    display: flex;
    align-items: center;
    justify-content: center;
    white-space: nowrap;
}

svg {
    display: block;
    flex: none;
}

.defs {
    position: absolute;
}

.gray {
    color: #999;
}

.brown {
    color: #630;
}

.muted {
    color: #999;
}

.screen {
    position: relative;
    height: 100vh;
    display: flex;
    flex-direction: column;
    border: 1px solid #000;
    overflow: hidden;
}

/* quick access */
.quickbar {
    display: flex;
    height: 36px;
    padding-top: 4px;
    flex: none;
}

.quickbar button {
    height: 20px;
}

.q {
    width: 24px;
}

.q.app {
    width: 22px;
    margin-right: 2px;
    border-right: 1px solid #ccc;
    justify-content: flex-start;
}

.q.custom {
    margin-left: 1px;
    border-left: 1px solid #ccc;
}

.drop {
    width: 14px;
}

.title {
    margin: 2px auto 0 245px;
    font-family: "Liberation Mono", "Noto Sans CJK SC", monospace;
    color: #bbb;
    line-height: 18px;
    white-space: nowrap;
}

/* ribbon tabs */
.tabs {
    display: flex;
    align-items: flex-end;
    height: 24px;
    flex: none;
    border-bottom: 1px solid #ccc;
}

.tab {
    height: 19px;
    padding: 0 11px;
    font-size: 15px;
    font-weight: 500;
    color: #666;
    border-right: 1px solid #ccc;
}

.tab.file {
    width: 48px;
    padding: 0 4px 0 0;
    gap: 3px;
    border-top: 1px solid #ccc;
}

.tab.active {
    height: 24px;
    width: 53px;
    margin: 0 8px -1px;
    font-weight: bold;
    color: #333;
    background: #fff;
    border: 1px solid #ccc;
    border-bottom: 0;
    padding: 2px 0 0;
}

.tab-set {
    display: flex;
    border: 1px solid #ccc;
    border-width: 1px 0 0 1px;
}

.tab.latin {
    font-family: "Liberation Mono", monospace;
    font-size: 13px;
    font-weight: bold;
}

/* ribbon */
.ribbon {
    display: flex;
    flex: none;
    height: 100px;
    border-bottom: 1px solid #ccc;
    background: linear-gradient(#ccc, #ccc) 0 77px / 100% 1px no-repeat;
}

.group {
    display: flex;
    flex-direction: column;
    background: linear-gradient(#ccc, #ccc) 100% 100% / 1px 43px no-repeat;
    padding-right: 1px;
}

.tools {
    display: flex;
    height: 77px;
    padding-top: 3px;
}

.group h2 {
    display: flex;
    align-items: center;
    justify-content: center;
    gap: 5px;
    height: 22px;
    white-space: nowrap;
}

.big {
    flex-direction: column;
    justify-content: flex-start;
    padding-top: 2px;
    line-height: 13px;
    color: #999;
}

.big svg {
    margin-bottom: 7px;
}

.big.on {
    color: #333;
}

.w20 { width: 20px; }
.w24 { width: 26px; }
.w31 { width: 31px; }
.w33 { width: 33px; }
.w34 { width: 34px; }
.w46 { width: 46px; }
.w48 { width: 48px; }
.w50 { width: 50px; }

.stack {
    display: flex;
    flex-direction: column;
}

.group:nth-child(4) .stack {
    width: 24px;
    padding-right: 4px;
}

.group:nth-child(5) .tools {
    padding-right: 8px;
}

.stack button {
    height: 24px;
}

.sep {
    width: 1px;
    height: 27px;
    margin: 26px 0 0 8px;
    background: #ccc;
}

.sep.near {
    margin-left: 2px;
}

.mini {
    width: 10px;
    height: 72px;
}

/* side panel */
.work {
    display: flex;
    flex: 1;
    min-height: 0;
}

.side {
    display: flex;
    flex-direction: column;
    width: 384px;
    flex: none;
    padding-bottom: 10px;
    background: linear-gradient(#ccc, #ccc) 377px 43px / 3px 506px no-repeat;
}

.side-tabs {
    display: flex;
    height: 43px;
    padding: 13px 7px 0 0;
    flex: none;
}

.side-tab {
    width: 30px;
    border: 1px solid #ccc;
    border-left: 0;
}

.side-tab.first {
    width: 23px;
    border-bottom: 0;
    justify-content: flex-start;
}

.rest {
    flex: 1;
    border-bottom: 1px solid #ccc;
}

.panel {
    display: flex;
    flex-direction: column;
    width: 377px;
}

.panel.model {
    height: 269px;
    flex: none;
    border-bottom: 2px solid #ccc;
}

.panel.mechanism {
    flex: 1;
    min-height: 0;
    border-bottom: 3px solid #ccc;
}

.panel-head {
    display: flex;
    align-items: center;
    gap: 5px;
    height: 28px;
    flex: none;
}

.panel-head.slim {
    height: 23px;
    padding-top: 2px;
}

.panel-head h3 {
    flex: 1;
    margin-left: 2px;
    font-size: 13px;
    font-weight: bold;
}

.search {
    display: flex;
    align-items: center;
    height: 27px;
    flex: none;
    padding-right: 6px;
    gap: 10px;
}

.search input {
    flex: 1;
    min-width: 0;
    height: 27px;
    border: 1px solid #ccc;
    border-left: 0;
    outline: 0;
}

.clear {
    margin: 0 6px 4px -30px;
    width: 12px;
}

.search .drop {
    width: 8px;
}

.tree {
    position: relative;
    flex: 1;
    min-height: 0;
    overflow: hidden;
    border: 1px solid #99c;
    border-width: 1px 1px 0 0;
}

table {
    width: 440px;
    table-layout: fixed;
    border-collapse: collapse;
}

th {
    height: 23px;
    padding: 2px 0 0 6px;
    text-align: left;
    color: #666;
    border-bottom: 1px solid #ccc;
    background: linear-gradient(#ccc, #ccc) 0 100% / 1px 12px no-repeat;
}

.c1 {
    width: 184px;
    background: none;
}

.c2 {
    width: 156px;
}

td {
    height: 20px;
    padding: 0 0 0 3px;
    white-space: nowrap;
    overflow: hidden;
}

td:first-child {
    padding: 0;
}

.node {
    display: flex;
    align-items: center;
    overflow: hidden;
}

.node > svg {
    margin-right: 7px;
}

.node > svg[width="14"] {
    margin: 0 8px 0 1px;
}

.node > svg[width="12"] {
    margin: 0 9px 0 2px;
}

.node > button,
.node > i {
    width: 14px;
    flex: none;
    color: #999;
}

.node > button {
    justify-content: flex-start;
}

.node.l0 > svg {
    margin: 0 7px 0 0;
}

.l1 { padding-left: 4px; }
.l2 { padding-left: 24px; }
.l3 { padding-left: 44px; }

.mark {
    width: 5px;
    height: 7px;
    margin: 0 2px 6px 0;
    border: 1px solid #333;
}

/* scroll bars */
.bars {
    display: flex;
    height: 18px;
    flex: none;
    border-top: 1px solid #ccc;
}

.bar {
    display: flex;
    color: #555;
}

.bar.off {
    color: #ccc;
}

.b1 {
    width: 185px;
}

.b1 button:first-child {
    width: 11px;
    justify-content: flex-start;
}

.b2 {
    flex: 1;
    border-left: 2px solid #ccc;
}

.b2.short {
    margin-right: 19px;
}

.bar button {
    width: 15px;
}

.track {
    flex: 1;
    border: 1px solid #ccc;
    border-width: 0 1px;
}

.thumb {
    display: block;
    height: 16px;
    border: 1px solid #ccc;
    background: repeating-linear-gradient(90deg, #ccc 0 2px, #fff 2px 3px) center / 12px 7px no-repeat;
}

.t27 { width: 27px; }
.t34 { width: 34px; }
.t110 { width: 110px; }

.vbar {
    position: absolute;
    top: 24px;
    right: 0;
    bottom: 0;
    width: 18px;
    display: flex;
    flex-direction: column;
    color: #555;
    background: #fff;
    border-left: 1px solid #ccc;
}

.vbar button {
    height: 16px;
}

.flip {
    transform: rotate(180deg);
}

.vtrack {
    flex: 1;
    border: 1px solid #ccc;
    border-width: 1px 0;
}

.vthumb {
    display: block;
    height: 72px;
    border: 1px solid #ccc;
    background: repeating-linear-gradient(#ccc 0 2px, #fff 2px 3px) center / 7px 12px no-repeat;
}

/* graphics area */
.canvas {
    position: relative;
    flex: 1;
    overflow: hidden;
    background: linear-gradient(#69c 198px, #99c 198px 328px, #9cc 328px 330px, #9c9 330px 430px, #cc9 430px);
}

.view-tools {
    position: absolute;
    top: 7px;
    left: 282px;
    display: flex;
    width: 392px;
    height: 28px;
    padding: 0 5px;
    background: #fff;
    border: 1px solid #ccc;
}

.view-tools button {
    position: relative;
    flex: 1;
    border-left: 1px solid #ccc;
}

.view-tools button:last-child {
    border-right: 1px solid #ccc;
}

.more::after {
    content: "";
    position: absolute;
    right: 2px;
    bottom: 3px;
    border: 2px solid #777;
    border-top-color: transparent;
    border-left-color: transparent;
}

.gear {
    position: absolute;
    top: 154px;
    left: 110px;
}

.status {
    display: flex;
    height: 11px;
    flex: none;
    padding-top: 2px;
    border-top: 2px solid #999;
}

.globe {
    margin-right: auto;
}

.tick {
    width: 35px;
    border-left: 1px solid #ccc;
}

.slot {
    width: 40px;
    margin: 1px 286px 0 2px;
    border: 1px solid #ccc;
    border-bottom: 0;
}

/* animation window */
.player {
    position: absolute;
    top: 113px;
    right: 140px;
    width: 125px;
    height: 245px;
    background: #fff;
    border: 3px solid #ccc;
}

.player-top {
    height: 20px;
    border-bottom: 1px solid #ccc;
}

.player-body {
    display: flex;
    flex-direction: column;
    padding: 2px 0 0 48px;
    height: 153px;
}

.player-body input {
    appearance: none;
    height: 3px;
    width: 100%;
    margin: 8px 0 8px 2px;
    border-top: 2px solid #999;
    border-left: 1px solid #999;
}

.player-body input::-webkit-slider-thumb {
    appearance: none;
    width: 1px;
    height: 1px;
}

.player-body output {
    color: #975;
    font-size: 11px;
}

.step {
    height: 25px;
    width: 85px;
    border: 1px solid #ccc;
    border-bottom-color: #99c;
    border-radius: 3px;
    padding-right: 6px;
}

.step.fast {
    padding-right: 20px;
    margin-bottom: 17px;
}

.modes {
    display: flex;
}

.loop {
    width: 52px;
    height: 24px;
    flex: none;
    background: #ccc;
    border: 1px solid #999;
    border-radius: 3px;
}

.once {
    width: 30px;
    height: 24px;
    border: 1px solid #ccc;
    border-radius: 3px;
}

.player-foot {
    padding: 1px 1px 2px;
    border-bottom: 1px solid #ccc;
}

.capture {
    width: 67px;
    height: 20px;
    font-family: "Liberation Mono", "Noto Sans CJK SC", monospace;
    font-weight: bold;
    border: 1px solid #ccc;
    border-bottom-color: #99c;
    border-radius: 3px;
}

/* recorder window */
.recorder {
    position: absolute;
    top: 0;
    right: 0;
    width: 157px;
    height: 437px;
    padding: 0 0 6px 6px;
    background: linear-gradient(#cff, #ccf 40px, #cff 80px, #9cf 50%, #ccf 70%, #699 95%, #69c);
    border: 1px solid #333;
    border-width: 0 0 2px 1px;
    border-radius: 0 0 0 6px;
    color: #000;
}

.rec-title {
    display: flex;
    height: 23px;
    gap: 5px;
}

.rec-title span {
    width: 29px;
    white-space: nowrap;
}

.win-btns {
    display: flex;
    height: 14px;
    flex: 1;
    border: 1px solid #556;
    border-width: 0 0 1px 1px;
    border-radius: 0 0 0 4px;
    overflow: hidden;
}

.win-btns button {
    flex: 1;
    background: linear-gradient(#eef, #aab);
    border-right: 1px solid #556;
}

.win-btns .x {
    flex: 2;
    background: linear-gradient(#e98, #b32);
    border: 0;
}

.client {
    height: 407px;
    background: #fff;
    border: 1px solid #366;
    border-right: 0;
}

.menu {
    display: flex;
    gap: 14px;
    height: 19px;
    padding: 2px 0 0 6px;
    background: linear-gradient(#fff 5px, #ccf 5px 17px, #cff 17px);
}

.menu a {
    color: #000;
    text-decoration: none;
}

.menu .dim {
    color: #888;
}

.rec-body {
    display: flex;
    flex-direction: column;
    align-items: flex-start;
    padding: 5px 0 0 3px;
    font-family: "Liberation Sans", "Noto Sans CJK SC", sans-serif;
    font-size: 13px;
    font-weight: bold;
    line-height: 15px;
}

.rec-body p {
    font-size: 13px;
    font-weight: bold;
    white-space: nowrap;
}

.rec-body .banner {
    align-self: stretch;
    height: 25px;
    font-size: 12px;
    line-height: 19px;
    text-align: center;
    border: 3px double #000;
    border-width: 3px 0;
}

.rec-btns {
    display: flex;
    gap: 3px;
    margin: 4px 0 2px 1px;
}

.rec-body button {
    width: 44px;
    height: 21px;
    border: 2px solid #666;
    border-width: 1px 2px 2px 1px;
    border-top-color: #ccc;
    border-left-color: #ccc;
}

.rec-body button:disabled {
    color: #999;
}

.frames {
    margin-bottom: 14px;
}

.rec-body h4 {
    display: flex;
    align-items: center;
    align-self: stretch;
    gap: 4px;
    font-size: 13px;
    font-weight: bold;
    line-height: 15px;
}

.rec-body h4::before,
.rec-body h4::after {
    content: "";
    width: 8px;
    height: 1px;
    background: #000;
}

.rec-body h4::after {
    flex: 1;
}

.area {
    display: flex;
    align-items: center;
    gap: 5px;
    height: 24px;
    overflow: hidden;
    align-self: stretch;
}

.area label,
.opt {
    display: flex;
    align-items: center;
    gap: 5px;
    white-space: nowrap;
}

.rec-body .area button {
    width: 72px;
    flex: none;
}

.rec-body input {
    appearance: none;
    width: 15px;
    height: 15px;
    margin: 0 0 0 2px;
    border: 1px solid #ccc;
    border-top-color: #333;
    border-left-color: #333;
}

.rec-body input:checked::before {
    content: "";
    display: block;
    width: 5px;
    height: 9px;
    margin: 0 0 0 4px;
    border: solid #000;
    border-width: 0 2px 2px 0;
    transform: rotate(40deg);
}

.rec-body .refresh {
    width: 71px;
    margin: 2px 0 20px 1px;
}

.pick {
    display: flex;
    align-items: center;
    gap: 3px;
    height: 19px;
    white-space: nowrap;
}

.pick select {
    appearance: none;
    height: 18px;
    padding: 0 0 0 9px;
    border: 1px solid #000;
    border-width: 1px 2px 2px 1px;
    border-radius: 0;
    background: #fff;
    color: #000;
    font: bold 12px "Liberation Sans", "DejaVu Sans", sans-serif;
}

.s62 { width: 63px; }
.s58 { width: 58px; }

.opt {
    height: 22px;
}

.cursor {
    position: absolute;
    top: 85px;
    right: 19px;
}

.battery {
    position: absolute;
    right: 7px;
    bottom: -9px;
    width: 64px;
    height: 64px;
    display: flex;
    flex-direction: column;
    align-items: center;
    padding-top: 13px;
    border: 4px solid #999;
    border-radius: 50%;
    background: linear-gradient(#9b9 14px, #3c3 14px, #2a2);
    box-shadow: inset 0 0 0 1px #dfd;
    color: #fff;
}

.battery b {
    font: 20px/20px "Noto Sans", sans-serif;
}

.battery small {
    font-size: 12px;
}
```
